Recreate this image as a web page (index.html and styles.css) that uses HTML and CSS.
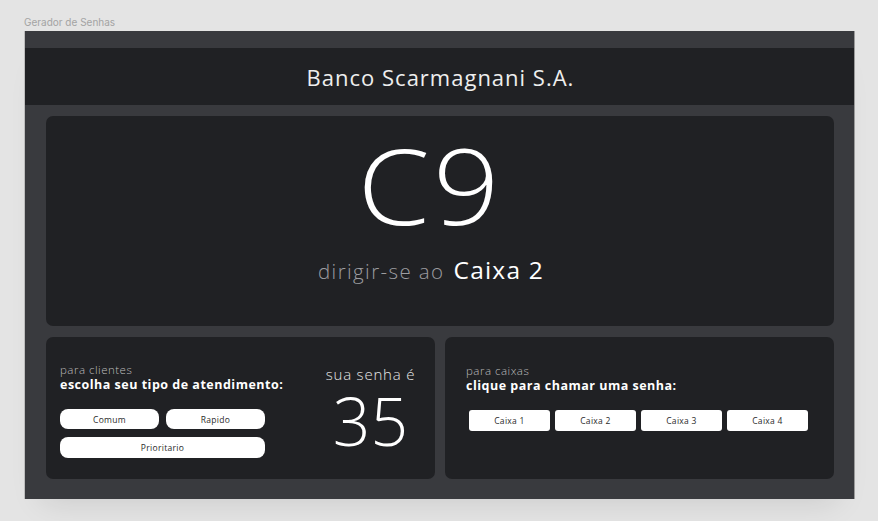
FILE: index.html
```html
<!DOCTYPE html>
<html lang="pt">
<head>
<meta charset="utf-8">
<title>Gerador de Senhas</title>
<link rel="stylesheet" href="styles.css">
</head>
<body>
<div class="label">Gerador de Senhas</div>
<div class="frame">
  <header class="header">Banco Scarmagnani S.A.</header>
  <main class="content">
    <section class="card main-card">
      <div class="code">C9</div>
      <div class="direction"><span class="dir-muted">dirigir-se ao</span> <span class="dir-strong">Caixa 2</span></div>
    </section>
    <div class="row">
      <section class="card client-card">
        <div class="client-left">
          <div class="small">para clientes</div>
          <div class="title">escolha seu tipo de atendimento:</div>
          <div class="type-buttons">
            <button class="btn pill">Comum</button>
            <button class="btn pill">Rapido</button>
            <button class="btn pill wide">Prioritario</button>
          </div>
        </div>
        <div class="client-right">
          <div class="your">sua senha é</div>
          <div class="number">35</div>
        </div>
      </section>
      <section class="card teller-card">
        <div class="small">para caixas</div>
        <div class="title">clique para chamar uma senha:</div>
        <div class="teller-buttons">
          <button class="btn box">Caixa 1</button>
          <button class="btn box">Caixa 2</button>
          <button class="btn box">Caixa 3</button>
          <button class="btn box">Caixa 4</button>
        </div>
      </section>
    </div>
  </main>
</div>
</body>
</html>
```
FILE: styles.css
```css
* { box-sizing: border-box; }
html, body { margin: 0; padding: 0; }
body {
  background: #e4e4e4;
  font-family: "Open Sans", "Noto Sans", sans-serif;
  width: 878px;
  height: 521px;
  overflow: hidden;
}
.label {
  height: 31px;
  padding: 15px 0 0 24px;
  font-size: 10px;
  line-height: 14px;
  color: #a3a3a3;
  font-family: "Inter", sans-serif;
}
.frame {
  margin-left: 24px;
  width: 831px;
  height: 468px;
  background: #393a3e;
  padding-top: 17px;
  border-left: 1px solid #bdbdbd;
  border-right: 1px solid #9a9a9a;
  box-shadow: 0 20px 30px -18px rgba(0,0,0,0.12);
}
.header {
  height: 57px;
  background: #202124;
  color: #eeeeee;
  font-size: 22px;
  letter-spacing: 1px;
  display: flex;
  align-items: center;
  justify-content: center;
  padding-left: 2px;
}
.content {
  padding: 11px 20px 0 21px;
  display: flex;
  flex-direction: column;
  gap: 11px;
}
.card {
  background: #202124;
  border-radius: 7px;
}
.main-card {
  height: 210px;
  display: flex;
  flex-direction: column;
  align-items: center;
  padding-right: 18px;
}
.code {
  color: #ffffff;
  font-size: 106px;
  line-height: 106px;
  height: 106px;
  font-weight: 300;
  margin-top: 15px;
  letter-spacing: 3px;
  margin-right: 2px;
  transform: scaleX(1.1);
}
.direction {
  margin-top: 19px;
  display: flex;
  align-items: baseline;
  gap: 9px;
  line-height: 28px;
}
.dir-muted { color: #9d9da0; font-size: 20.5px; font-weight: 300; letter-spacing: 1.4px; }
.dir-strong { color: #ffffff; font-size: 24.5px; letter-spacing: 1.2px; }
.row {
  display: flex;
  gap: 10px;
}
.client-card, .teller-card {
  width: 389px;
  height: 142px;
}
.client-card {
  display: flex;
  padding: 26px 0 0 14px;
}
.client-left { width: 236px; }
.small {
  color: #bdbdbd;
  font-size: 11.5px;
  font-weight: 300;
  line-height: 14px;
  letter-spacing: 0.5px;
}
.title {
  color: #ffffff;
  font-size: 12.5px;
  font-weight: 700;
  line-height: 16px;
  letter-spacing: 0.5px;
  white-space: nowrap;
}
.type-buttons {
  margin-top: 16px;
  display: grid;
  grid-template-columns: 99px 99px;
  column-gap: 7px;
  row-gap: 8px;
}
.btn {
  border: none;
  background: #ffffff;
  color: #2a2a2a;
  font-family: inherit;
  font-size: 8.5px;
  letter-spacing: 0.3px;
  padding: 0;
}
.pill { height: 20px; border-radius: 8px; }
.pill.wide { grid-column: 1 / span 2; height: 21px; }
.client-right {
  flex: 1;
  display: flex;
  flex-direction: column;
  align-items: center;
  padding-left: 10px;
}
.your {
  color: #e6e6e6;
  font-size: 15px;
  font-weight: 300;
  line-height: 20px;
  letter-spacing: 0.8px;
  margin-top: 1px;
}
.number {
  color: #ffffff;
  font-size: 66px;
  line-height: 66px;
  font-weight: 300;
  margin-top: 3px;
  letter-spacing: 0;
}
.teller-card {
  padding: 27px 0 0 21px;
}
.teller-buttons {
  margin-top: 16px;
  padding-left: 3px;
  display: flex;
  gap: 5px;
}
.box {
  width: 81px;
  height: 21px;
  border-radius: 3px;
}
```
